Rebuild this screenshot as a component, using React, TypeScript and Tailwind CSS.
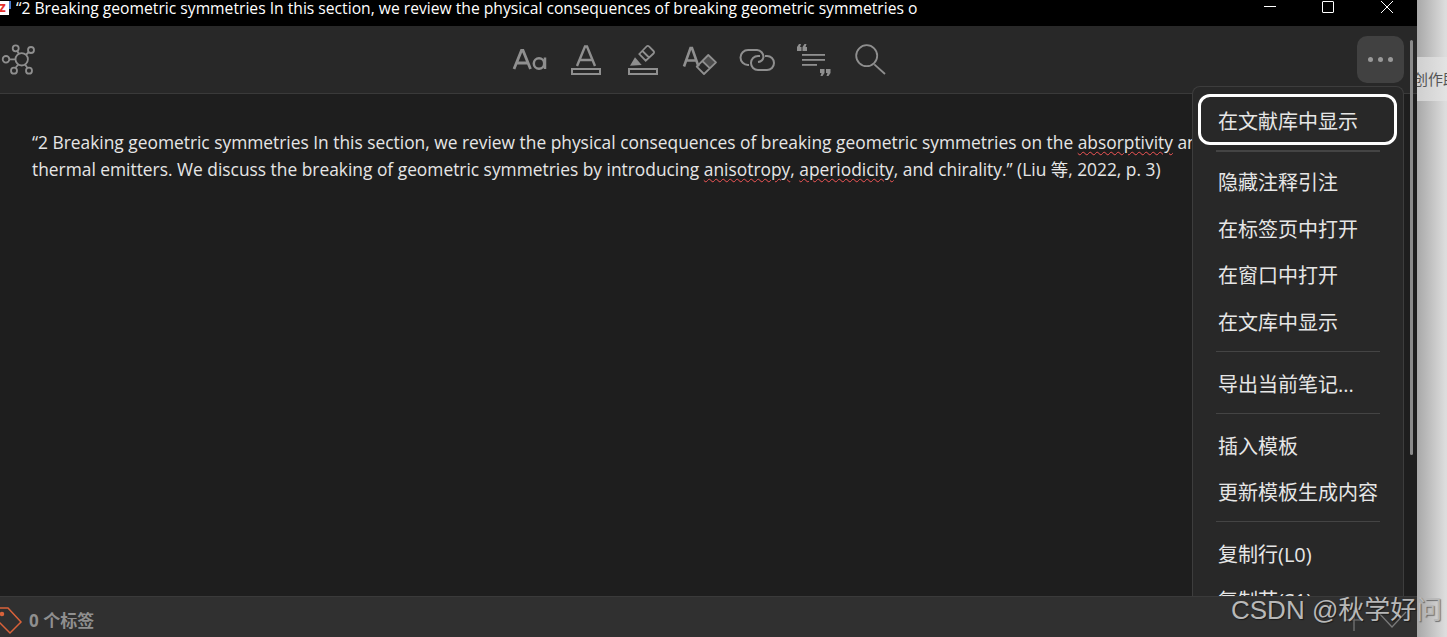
const cjk = "font-['Open_Sans','Noto_Sans_CJK_SC',sans-serif]";

function Squiggle({ children }: { children: string }) {
  return (
    <span className="underline decoration-wavy decoration-[#f25555] decoration-1 underline-offset-2">
      {children}
    </span>
  );
}

function GraphIcon() {
  return (
    <svg width="38" height="36" viewBox="0 0 38 36" fill="none" stroke="#8f8f8f" strokeWidth="1.8">
      <circle cx="21.700" cy="17.300" r="6.200" />
      <circle cx="15.700" cy="6.300" r="3" />
      <circle cx="31" cy="8" r="3" />
      <circle cx="6" cy="17.300" r="3.300" />
      <circle cx="14" cy="28.700" r="3" />
      <circle cx="29" cy="28.700" r="3" />
      <path d="M17.200 9l1.800 3M28.800 10l-3 3M9.300 17.300h6.200M15.300 26l3-3.500M27.500 26l-2.500-3.500" />
    </svg>
  );
}

function Toolbar() {
  return (
    <div className="flex items-center gap-[19px] pr-[17px] text-[#8f8f8f]">
      <svg width="38" height="38" viewBox="0 0 38 38" fill="none" stroke="currentColor">
        <path d="M4 28L11.500 9.500h1.500L20.500 28M7 22h11" strokeWidth="2.800" />
        <circle cx="29" cy="22.500" r="5.200" strokeWidth="2.500" />
        <path d="M35 16.500V28" strokeWidth="2.500" />
      </svg>
      <svg width="38" height="38" viewBox="0 0 38 38" fill="none" stroke="currentColor" strokeWidth="2.400">
        <path d="M10 25L18 5.500h2L28 25M12.500 19h13" />
        <rect x="5" y="28" width="28" height="5" strokeWidth="2" />
      </svg>
      <svg width="38" height="38" viewBox="0 0 38 38" fill="none" stroke="currentColor" strokeWidth="1.800">
        <path d="M15.300 13L22.500 5.500c.8-.8 1.800-.8 2.500 0l4.500 4.500c.8.8.8 1.800 0 2.500L21.700 19.700zM18.500 10l7 7" />
        <path d="M6 24.700L11 16.300l6.700 7.700z" fill="currentColor" stroke="none" />
        <rect x="5" y="28" width="28" height="5" strokeWidth="2" />
      </svg>
      <svg width="38" height="38" viewBox="0 0 38 38" fill="none" stroke="currentColor">
        <path d="M3 25.500L9.500 7h1.500L17.500 25.500M5.500 19.500h9.500" strokeWidth="2.600" />
        <path d="M21.300 20l6-6 7.700 7.300-6 5.700z" fill="currentColor" fillOpacity="0.35" stroke="none" />
        <path d="M15.700 25.700L27.300 14l7.700 7.300L23 33zM21.300 20l7.700 7.300" strokeWidth="1.800" strokeLinejoin="round" />
      </svg>
      <svg width="38" height="38" viewBox="0 0 38 38" fill="none" stroke="currentColor" strokeWidth="2">
        <path d="M11 24H10A7 7 0 0 1 10 9H19A7 7 0 0 1 25.500 16A6 6 0 0 1 20 21" />
        <path d="M27 15H29A7 7 0 0 1 29 29H20A7 7 0 0 1 20 15H22" />
      </svg>
      <svg width="38" height="38" viewBox="0 0 38 38" fill="currentColor">
        <path d="M2 6l2-3h2L5 6h1.500v4H2zM7.500 6l2-3h2l-1 3H12v4H7.500z" />
        <rect x="7" y="13" width="23" height="1.800" />
        <rect x="7" y="18" width="23" height="1.800" />
        <rect x="7" y="23" width="15" height="1.800" />
        <path d="M25 28h4.500v4l-2 3h-2l1-3H25zM31 28h4.500v4l-2 3h-2l1-3H31z" />
      </svg>
      <svg width="38" height="38" viewBox="0 0 38 38" fill="none" stroke="currentColor" strokeWidth="1.800">
        <circle cx="14.700" cy="14.700" r="10.500" />
        <path d="M22.300 23.300L33 33" />
      </svg>
    </div>
  );
}

function MenuItem({ label }: { label: string }) {
  return (
    <div className="h-[46.500px] flex items-center pt-[4px] pl-[25px] text-[20px] text-[#e6e6e6]">{label}</div>
  );
}

function Divider() {
  return <div className="h-px mx-[23px] mt-[6px] mb-[8px] bg-[#444444]" />;
}

function Menu() {
  return (
    <div className={`absolute left-[1192px] top-[86px] w-[212px] h-[510px] overflow-hidden bg-[#282828] border border-b-0 border-[#3d3d3d] rounded-t-lg ${cjk}`}>
      <div className="ml-[5px] mr-[6px] mt-[7px] h-[51px] flex items-center pt-[4px] pl-[17px] border-[3px] border-white rounded-[12px] text-[20px] text-[#e6e6e6]">
        在文献库中显示
      </div>
      <div className="h-[2px] mx-[23px] mt-[5px] mb-[6px] bg-[#444444]" />
      <MenuItem label="隐藏注释引注" />
      <MenuItem label="在标签页中打开" />
      <MenuItem label="在窗口中打开" />
      <MenuItem label="在文库中显示" />
      <div className="h-px mx-[23px] mt-[7px] mb-[8px] bg-[#444444]" />
      <MenuItem label="导出当前笔记..." />
      <Divider />
      <MenuItem label="插入模板" />
      <MenuItem label="更新模板生成内容" />
      <Divider />
      <MenuItem label="复制行(L0)" />
      <MenuItem label="复制节(S1)" />
    </div>
  );
}

export default function App() {
  return (
    <div className={`relative flex w-[1447px] h-[637px] overflow-hidden ${cjk}`}>
      <div className="flex flex-col w-[1417px] shrink-0 bg-[#1e1e1e]">
        <div className="h-[26px] shrink-0 bg-black flex items-center">
          <div className="relative w-[9px] h-[14px] shrink-0 -mt-[10px] bg-white overflow-hidden">
            <span className="absolute -left-[1px] -top-[3px] text-[14px] leading-[18px] font-bold text-[#e5322d]">z</span>
          </div>
          <div className="w-[2px] h-[8px] shrink-0 -mt-[16px] bg-[#4a78c8]" />
          <div className="ml-[5px] w-[902px] overflow-hidden whitespace-nowrap text-[15.660px] text-white -mt-[9px]">
            “2 Breaking geometric symmetries In this section, we review the physical consequences of breaking geometric symmetries on the absorptivity
          </div>
          <div className="ml-auto flex items-center gap-[46px] pr-[23px] -mt-[13px] text-white">
            <div className="w-[12px] h-px bg-white" />
            <div className="w-[12px] h-[12px] border border-white rounded-[1px]" />
            <svg width="14" height="14" viewBox="0 0 14 14" stroke="white" strokeWidth="1">
              <path d="M1 1l12 12M13 1L1 13" />
            </svg>
          </div>
        </div>

        <div className="relative h-[68px] shrink-0 flex items-center justify-center bg-[#282828] border-b border-[#3a3a3a]">
          <div className="absolute left-0 top-[16px]">
            <GraphIcon />
          </div>
          <Toolbar />
          <div className="absolute right-[13px] top-[10px] w-[47px] h-[47px] rounded-[10px] bg-[#414141] flex items-center justify-center gap-[5px]">
            <div className="w-[5px] h-[5px] rounded-full bg-[#999999]" />
            <div className="w-[5px] h-[5px] rounded-full bg-[#999999]" />
            <div className="w-[5px] h-[5px] rounded-full bg-[#999999]" />
          </div>
        </div>

        <div className="flex-1 min-h-0 pl-[32px] pr-[205px] pt-[35px] text-[17.370px] leading-[27px] text-[#e6e6e6] overflow-hidden">
          <p>
            “2 Breaking geometric symmetries In this section, we review the physical consequences of breaking geometric
            symmetries on the <Squiggle>absorptivity</Squiggle> and thermal emitters. We discuss the breaking of geometric
            symmetries by introducing <Squiggle>anisotropy</Squiggle>, <Squiggle>aperiodicity</Squiggle>, and chirality.” (Liu 等, 2022, p. 3)
          </p>
        </div>

        <div className="relative z-10 h-[41px] shrink-0 bg-[#303030] border-t border-[#3a3a3a] flex items-center">
          <svg width="24" height="40" viewBox="0 0 24 40" fill="none" stroke="#d9623a" strokeWidth="1.500" className="shrink-0">
            <path d="M-4 11H8L21 25L10 36L-4 22" />
            <circle cx="2" cy="17" r="1.500" fill="#d9623a" />
          </svg>
          <span className="ml-[5px] pt-[7px] text-[17px] font-bold text-[#8f8f8f]">0 个标签</span>
        </div>
      </div>

      <div className="relative flex-1 bg-gradient-to-r from-[#a8a8a8] via-[#dcdcdc] to-[#e8e8e8]">
        <div className="mt-[57px] h-[44px] bg-gradient-to-r from-[#cfcfcf] to-[#f5f5f5] flex items-center overflow-hidden whitespace-nowrap text-[15px] text-[#555555]">
          <span className="-ml-[4px]">创作助手</span>
        </div>
      </div>

      <div className="absolute left-[1410px] top-[40px] w-[3px] h-[415px] bg-[#8a8a8a] rounded-full" />
      <Menu />
      <svg width="64" height="24" viewBox="0 0 64 24" fill="none" stroke="#7a7a7a" strokeWidth="1.200" className="absolute left-[1345px] top-[609px] z-20">
        <path d="M9 1v21M0 11h18M33 3l14 15 14-15" />
      </svg>
      <div className="absolute left-[1231px] top-[592px] z-30 text-[26px] leading-[36px] text-[#b8b8b8] [text-shadow:1px_1px_1px_rgba(0,0,0,0.45)] font-['Liberation_Sans','Noto_Sans_CJK_SC',sans-serif] whitespace-nowrap">
        CSDN @秋学好问
      </div>
    </div>
  );
}
